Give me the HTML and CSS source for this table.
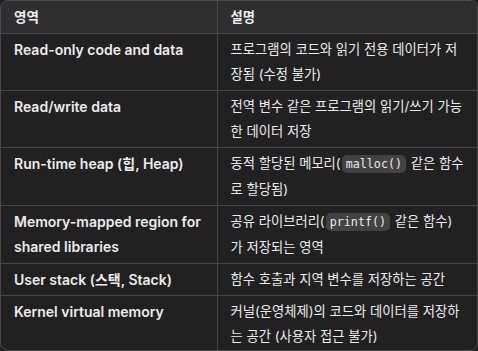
FILE: index.html
```html
<!DOCTYPE html>
<html lang="ko">
<head>
<meta charset="utf-8">
<link rel="stylesheet" href="styles.css">
</head>
<body>
<div class="wrap">
<table class="tbl">
<colgroup><col class="col1"><col class="col2"></colgroup>
<thead>
<tr><th class="c1">영역</th><th class="c2">설명</th></tr>
</thead>
<tbody>
<tr><td class="c1">Read-only code and data</td><td class="c2">프로그램의 코드와 읽기 전용 데이터가 저장됨 (수정 불가)</td></tr>
<tr><td class="c1">Read/write data</td><td class="c2">전역 변수 같은 프로그램의 읽기/쓰기 가능한 데이터 저장</td></tr>
<tr><td class="c1">Run-time heap (힙, Heap)</td><td class="c2">동적 할당된 메모리(<code>malloc()</code> 같은 함수로 할당됨)</td></tr>
<tr><td class="c1">Memory-mapped region for shared libraries</td><td class="c2">공유 라이브러리(<code>printf()</code> 같은 함수)<br>가 저장되는 영역</td></tr>
<tr><td class="c1">User stack (스택, Stack)</td><td class="c2">함수 호출과 지역 변수를 저장하는 공간</td></tr>
<tr><td class="c1">Kernel virtual memory</td><td class="c2">커널(운영체제)의 코드와 데이터를 저장하는 공간 (사용자 접근 불가)</td></tr>
</tbody>
</table>
</div>
</body>
</html>
```
FILE: styles.css
```css
html, body {
  margin: 0;
  padding: 0;
  background: #212121;
}
body {
  font-family: "Inter", "Noto Sans CJK KR", sans-serif;
  color: #ececec;
  font-size: 13.5px;
}
.wrap {
  width: 478px;
  height: 351px;
  box-sizing: border-box;
  border: 1px solid #4a4a4a;
  border-radius: 8px;
  overflow: hidden;
  background: #212121;
}
.tbl {
  width: 100%;
  border-collapse: collapse;
  table-layout: fixed;
}
.col1 { width: 216px; }
.tbl th, .tbl td {
  text-align: left;
  vertical-align: top;
  padding: 3px 12px 3px 13px;
  line-height: 25px;
  border-bottom: 1px solid #474747;
}
.tbl tr:last-child td { border-bottom: none; }
.tbl th {
  background: #2f2f2f;
  font-weight: 600;
  padding-top: 4px;
  padding-bottom: 3px;
}
.tbl .c1 {
  border-right: 1px solid #474747;
  font-weight: 600;
  font-size: 14px;
}
.tbl th.c1 { font-size: 13.5px; }
.tbl .c2 { font-size: 13.3px; }
.tbl td.c2 { font-weight: 400; }
code {
  font-family: "DejaVu Sans Mono", monospace;
  font-size: 11.7px;
  background: #424242;
  border-radius: 5px;
  padding: 2px 4px;
  margin: 0 1px;
}
```
